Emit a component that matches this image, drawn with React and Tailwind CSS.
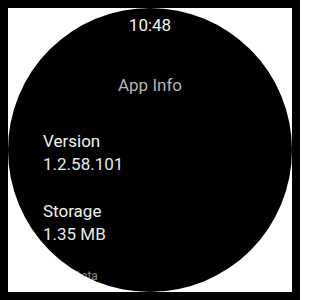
import React from "react";

const rows = [
  { label: "Version", value: "1.2.58.101" },
  { label: "Storage", value: "1.35 MB" },
];

const App = () => {
  return (
    <div className="w-[300px] h-[300px] bg-black p-2" style={{ fontFamily: "Roboto, 'Noto Sans', sans-serif" }}>
      <div className="w-full h-full bg-white">
        {/* WATCH SCREEN */}
        <div className="w-full h-full rounded-full bg-black overflow-hidden pt-[7px]">
          <p className="text-center text-[17px] leading-[20px] text-[#f2f2f2]">10:48</p>

          <p className="mt-[40px] text-center text-[17px] leading-[20px] text-[#b5b5b5]">App Info</p>

          <div className="mt-[35px] pl-[35px] flex flex-col gap-[24px]">
            {rows.map((row) => (
              <div key={row.label} className="text-[17px] leading-[23px]">
                <p className="text-[#f0f0f0]">{row.label}</p>
                <p className="text-[#e8e8e8]">{row.value}</p>
              </div>
            ))}
          </div>

          <p className="mt-[23px] pl-[65px] text-[12px] leading-[14px] text-[#8a8a8a]">Data</p>
        </div>
      </div>
    </div>
  );
};

export default App;
